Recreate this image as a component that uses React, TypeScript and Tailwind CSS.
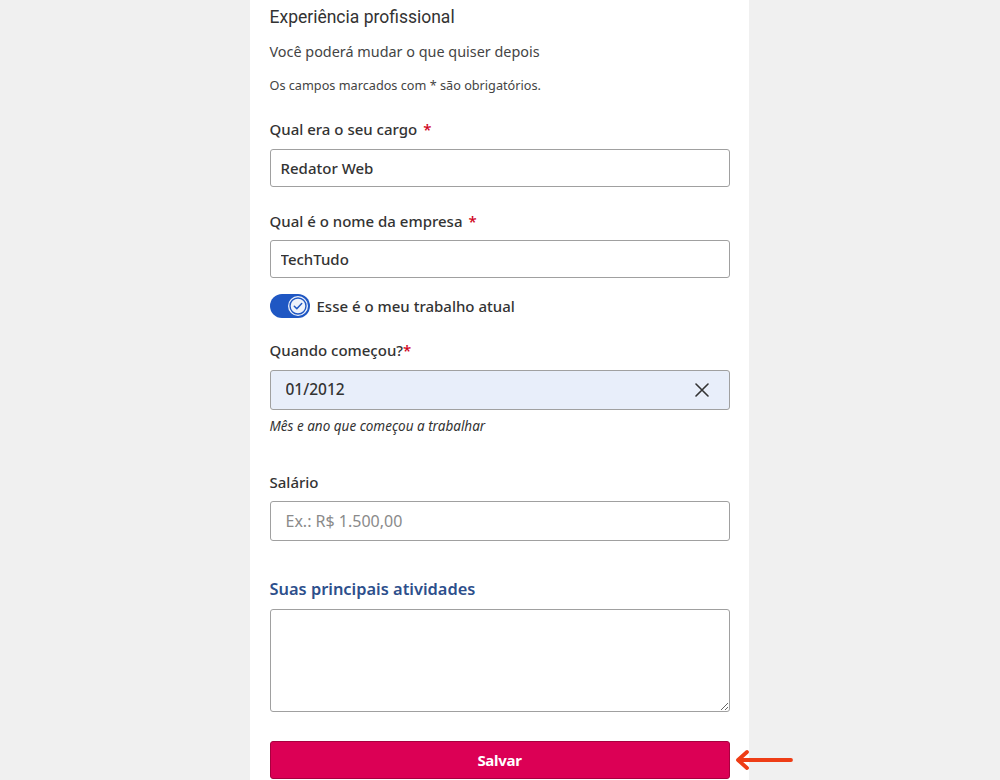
import React, { useState } from "react";

const Label = ({ text, required, gap = true }: { text: string; required?: boolean; gap?: boolean }) => (
  <label className="block text-[15px] leading-[20px] font-medium text-[#333]">
    {text}
    {required && <span className={`text-[#d0021b] ${gap ? "ml-[6px]" : ""}`}>*</span>}
  </label>
);

const App = () => {
  const [current, setCurrent] = useState<boolean>(true);
  const [start, setStart] = useState<string>("01/2012");

  return (
    <main className="w-full h-[780px] bg-[#f0f0f0] flex justify-center overflow-hidden font-['Noto_Sans',sans-serif]">
      <div className="w-[499px] ml-[-2px] bg-white pl-[20px] pr-[19px] pt-[6px]">
        <h1 className="font-['Roboto',sans-serif] text-[17.5px] leading-[22px] text-[#333] mb-[14px]">
          Experiência profissional
        </h1>
        <p className="text-[14.4px] leading-[20px] text-[#444] mb-[15px]">Você poderá mudar o que quiser depois</p>
        <p className="text-[12.7px] leading-[16px] text-[#444] mb-[26px]">Os campos marcados com * são obrigatórios.</p>

        <Label text="Qual era o seu cargo" required />
        <input
          defaultValue="Redator Web"
          className="mt-[10px] w-[460px] h-[38px] border border-[#a0a0a0] rounded-[3px] px-[10px] text-[15px] font-medium text-[#333] outline-none"
        />

        <div className="mt-[24px]">
          <Label text="Qual é o nome da empresa" required />
        </div>
        <input
          defaultValue="TechTudo"
          className="mt-[9px] w-[460px] h-[38px] border border-[#a0a0a0] rounded-[3px] px-[10px] text-[15px] font-medium text-[#333] outline-none"
        />

        <div className="mt-[16px] flex items-center gap-[7px]">
          <button
            onClick={() => setCurrent(!current)}
            className={`w-[40px] h-[24px] rounded-full flex items-center px-[2px] ${
              current ? "bg-[#1f57c3] justify-end" : "bg-[#bbb] justify-start"
            }`}
          >
            <span className="w-[20px] h-[20px] rounded-full bg-[#eef2fb] flex items-center justify-center">
              {current && (
                <svg width="20" height="20" viewBox="0 0 20 20" fill="none">
                  <circle cx="10" cy="10" r="8" stroke="#1f57c3" strokeWidth="1.4" />
                  <path d="M6.3 10.2l2.5 2.5 4.9-5.1" stroke="#1f57c3" strokeWidth="1.5" strokeLinecap="round" strokeLinejoin="round" />
                </svg>
              )}
            </span>
          </button>
          <span className="text-[15px] leading-[20px] font-medium text-[#333]">Esse é o meu trabalho atual</span>
        </div>

        <div className="mt-[22px]">
          <Label text="Quando começou?" required gap={false} />
        </div>
        <div className="mt-[10px] w-[460px] h-[40px] border border-[#a0a0a0] rounded-[3px] bg-[#e8eefa] flex items-center pl-[15px] pr-[20px]">
          <input
            value={start}
            onChange={(e) => setStart(e.target.value)}
            className="flex-1 bg-transparent text-[15.5px] font-medium text-[#333] outline-none"
          />
          <button onClick={() => setStart("")} className="text-[#333]">
            <svg width="14" height="14" viewBox="0 0 14 14" fill="none">
              <path d="M1 1l12 12M13 1L1 13" stroke="#333" strokeWidth="1.6" strokeLinecap="round" />
            </svg>
          </button>
        </div>
        <p className="mt-[7px] text-[13.5px] leading-[18px] italic text-[#333]">Mês e ano que começou a trabalhar</p>

        <div className="mt-[37px]">
          <Label text="Salário" />
        </div>
        <input
          placeholder="Ex.: R$ 1.500,00"
          className="mt-[9px] w-[460px] h-[40px] border border-[#a0a0a0] rounded-[3px] px-[15px] text-[16px] text-[#333] placeholder:text-[#8a8a8a] outline-none"
        />

        <h2 className="mt-[38px] text-[16.4px] leading-[20px] font-semibold text-[#2d4f8c]">Suas principais atividades</h2>
        <textarea className="mt-[10px] block w-[460px] h-[103px] border border-[#a0a0a0] rounded-[3px] p-[10px] text-[15px] outline-none resize-y" />

        <div className="mt-[29px] flex items-center">
          <button className="shrink-0 w-[460px] h-[38px] rounded-[3px] bg-[#dc0055] border border-[#a8003f] text-white text-[15px] font-bold tracking-[-0.3px]">
            Salvar
          </button>
          <svg className="shrink-0 ml-[5px]" width="58" height="22" viewBox="0 0 58 22" fill="none">
            <path d="M56 11H4M12 3L3 11l9 8" stroke="#ee3d16" strokeWidth="3.8" strokeLinecap="round" strokeLinejoin="round" />
          </svg>
        </div>
      </div>
    </main>
  );
};

export default App;
